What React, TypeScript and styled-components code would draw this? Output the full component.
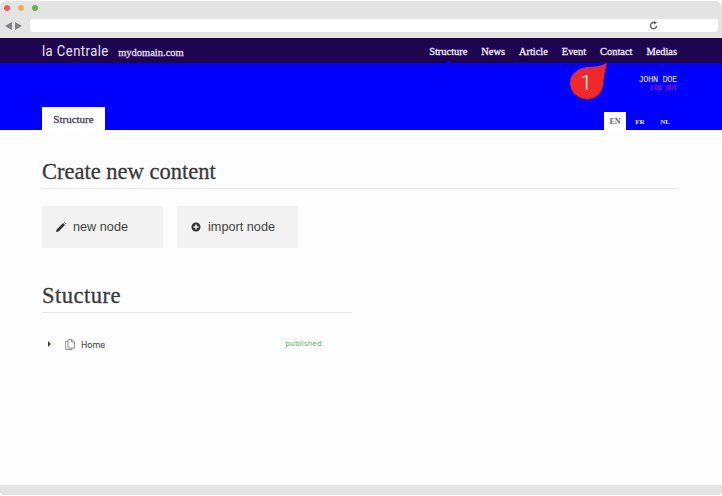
import React from "react";
import styled, { createGlobalStyle } from "styled-components";

const Global = createGlobalStyle`
  html, body { margin: 0; padding: 0; background: #fff; }
  #root { width: 722px; height: 496px; overflow: hidden; }
`;
const Page = styled.div`
  position: relative; width: 722px; height: 496px; display: flex; flex-direction: column;
  background: #fefefe; font-family: "Liberation Sans", sans-serif; overflow: hidden;
`;
const Chrome = styled.div`
  height: 37px; margin-top: 1px; background: #e4e4e4; border-radius: 6px 6px 0 0;
  display: flex; flex-direction: column; padding: 0 4px; box-sizing: border-box;
`;
const Lights = styled.div`display: flex; gap: 8px; padding: 4px 0 0 0; height: 14px; box-sizing: border-box;`;
const Light = styled.span<{ $c: string }>`width: 6px; height: 6px; border-radius: 50%; background: ${p => p.$c};`;
const ChromeRow = styled.div`display: flex; align-items: center; margin-top: 4px; gap: 7px;`;
const Arrows = styled.svg`width: 18px; height: 8px; color: #7d8186; flex: none; margin-left: 1px;`;
const Address = styled.div`
  flex: 1; height: 13px; background: #fff; border-radius: 3px; display: flex; align-items: center;
  justify-content: flex-end; padding-right: 60px;
`;
const Reload = styled.svg`width: 9px; height: 9px; color: #666;`;
const TopNav = styled.div`
  height: 25px; background: #1e0550; display: flex; align-items: center; justify-content: space-between;
  padding: 1px 45px 0 42px; box-sizing: border-box;
`;
const Brand = styled.div`display: flex; align-items: baseline; gap: 9px;`;
const Logo = styled.span`font: 400 14.5px Roboto, sans-serif; color: #e9e5f1; letter-spacing: 0.5px; transform-origin: left; display: inline-block; transform: scaleX(0.9); margin-right: -7px;`;
const Domain = styled.span`font: 400 10.5px "Liberation Serif", serif; color: #e2deea; -webkit-text-stroke: 0.3px #e2deea;`;
const Menu = styled.nav`display: flex; gap: 14px;`;
const MenuItem = styled.span<{ $active?: boolean }>`
  position: relative; font: 400 10.4px "Liberation Serif", serif; color: #eeeaf4; -webkit-text-stroke: 0.3px #eeeaf4;
  ${p => p.$active ? `&::after { content: ""; position: absolute; left: 50%; bottom: -6px; margin-left: -3px;
    border: 3px solid transparent; border-top: 0; border-bottom-color: #0000ff; }` : ""}
`;
const Band = styled.div`height: 67px; background: #0000ff; display: flex; flex-direction: column; justify-content: space-between; padding: 0 45px 0 42px;`;
const User = styled.div`align-self: flex-end; padding-top: 13px; text-align: right;`;
const UserName = styled.div`color: #e8e8ff; font: 400 8.6px/8px "Liberation Mono", monospace; letter-spacing: -0.35px;`;
const LogOut = styled.div`color: #e0009a; font: 400 7px/8px "Liberation Mono", monospace; letter-spacing: -0.35px;`;
const Tabs = styled.div`display: flex; justify-content: space-between; align-items: flex-end;`;
const MainTab = styled.div`
  width: 63px; height: 23px; padding-top: 1px; box-sizing: border-box; background: #fff; display: flex; align-items: center; justify-content: center;
  font: 400 11px "Liberation Serif", serif; color: #3b3550; -webkit-text-stroke: 0.25px #3b3550;
`;
const Langs = styled.div`display: flex; gap: 3px; margin-right: 1px;`;
const Lang = styled.div<{ $active?: boolean }>`
  width: 22px; height: 18px; padding-top: 1px; box-sizing: border-box; display: flex; align-items: center; justify-content: center;
  font: 700 ${p => p.$active ? "8px" : "7px"} "Liberation Serif", serif; color: ${p => p.$active ? "#6a667c" : "#e4e4ff"};
  background: ${p => p.$active ? "#fff" : "transparent"};
`;
const Content = styled.main`flex: 1; padding: 27px 45px 0 42px;`;
const Heading = styled.h2<{ $narrow?: boolean }>`
  margin: 0; font: 400 22.5px/30px "Liberation Serif", serif; color: #3a3a3a; padding-bottom: 1px;
  -webkit-text-stroke: 0.3px #3a3a3a; border-bottom: 1px solid #e8e8e8; width: ${p => p.$narrow ? "310px" : "auto"};
  letter-spacing: ${p => p.$narrow ? "0.5px" : "0"};
`;
const Actions = styled.div`display: flex; gap: 14px; margin: 17px 0 33px;`;
const ActionButton = styled.div`
  width: 121px; height: 42px; background: #f2f2f2; display: flex; align-items: center; gap: 7px; padding-left: 14px;
  box-sizing: border-box; font-size: 12.7px; color: #444;
`;
const ActionIcon = styled.svg`width: 10px; height: 10px; color: #333; flex: none;`;
const TreeRow = styled.div`display: flex; align-items: center; width: 274px; margin: 24px 0 0 6px; height: 14px;`;
const Caret = styled.span`width: 0; height: 0; border: 3px solid transparent; border-right: 0; border-left: 3px solid #1d5a2a; margin-right: 14px;`;
const FileIcon = styled.svg`width: 10px; height: 11px; color: #888; margin-right: 6px; flex: none;`;
const NodeName = styled.span`font: 400 8.5px "Open Sans", sans-serif; color: #444; flex: 1; -webkit-text-stroke: 0.15px #444;`;
const Status = styled.span`font: 400 8px "Open Sans", sans-serif; color: #5ab45f; margin-top: -3px;`;
const BottomBar = styled.div`height: 10px; background: #e4e4e4; margin-bottom: 1px; border-radius: 0 0 4px 4px;`;
const Marker = styled.div`position: absolute; left: 570px; top: 62px; width: 38px; height: 38px;`;
const MarkerShape = styled.svg`position: absolute; inset: 0; width: 38px; height: 38px;`;
const MarkerNum = styled.span`position: absolute; left: 10px; top: 11px; width: 12px; text-align: center; font: 300 20px/20px Roboto, sans-serif; color: #fff;`;

export default function App() {
  return (
    <Page>
      <Global />
      <Chrome>
        <Lights><Light $c="#f45b52" /><Light $c="#f5b04a" /><Light $c="#5cb947" /></Lights>
        <ChromeRow>
          <Arrows viewBox="0 0 18 8"><path fill="currentColor" d="M0 4l7-4v8zM17 4l-7-4v8z" /></Arrows>
          <Address>
            <Reload viewBox="0 0 10 10" fill="none" stroke="currentColor" strokeWidth="1.6">
              <path d="M8.4 5.2A3.4 3.4 0 1 1 6.6 2.1" /><path fill="currentColor" stroke="none" d="M5.6 0l3.4 2-3.4 2z" />
            </Reload>
          </Address>
        </ChromeRow>
      </Chrome>
      <TopNav>
        <Brand><Logo>la Centrale</Logo><Domain>mydomain.com</Domain></Brand>
        <Menu>
          <MenuItem $active>Structure</MenuItem><MenuItem>News</MenuItem><MenuItem>Article</MenuItem>
          <MenuItem>Event</MenuItem><MenuItem>Contact</MenuItem><MenuItem>Medias</MenuItem>
        </Menu>
      </TopNav>
      <Band>
        <User><UserName>JOHN DOE</UserName><LogOut>LOG OUT</LogOut></User>
        <Tabs>
          <MainTab>Structure</MainTab>
          <Langs><Lang $active>EN</Lang><Lang>FR</Lang><Lang>NL</Lang></Langs>
        </Tabs>
      </Band>
      <Content>
        <Heading>Create new content</Heading>
        <Actions>
          <ActionButton>
            <ActionIcon viewBox="0 0 10 10"><path fill="currentColor" d="M0 10l.6-2.6L7 1l2 2-6.400 6.400zM7.700.3l.6-.3 1.700 1.700-.3.6z" /></ActionIcon>
            new node
          </ActionButton>
          <ActionButton>
            <ActionIcon viewBox="0 0 10 10"><circle cx="5" cy="5" r="4.500" fill="currentColor" /><path stroke="#f2f2f2" strokeWidth="1.500" d="M5 2.500v5M2.500 5h5" /></ActionIcon>
            import node
          </ActionButton>
        </Actions>
        <Heading $narrow>Stucture</Heading>
        <TreeRow>
          <Caret />
          <FileIcon viewBox="0 0 10 11" fill="none" stroke="currentColor" strokeWidth="0.9">
            <path d="M3 .5h3.500L9.500 3v6H3zM3 2.500H.7v8H7V9M6.500.5V3h3" />
          </FileIcon>
          <NodeName>Home</NodeName>
          <Status>published</Status>
        </TreeRow>
      </Content>
      <BottomBar />
      <Marker>
        <MarkerShape viewBox="0 0 38 38"><path fill="#f0282a" d="M37 1 C31 4 25 5 17 5 C7 6 0 13 0 21 C0 30 8 37 17 37 C26 37 33 30 33 22 C34 14 35 7 37 1Z" /></MarkerShape>
        <MarkerNum>1</MarkerNum>
      </Marker>
    </Page>
  );
}
